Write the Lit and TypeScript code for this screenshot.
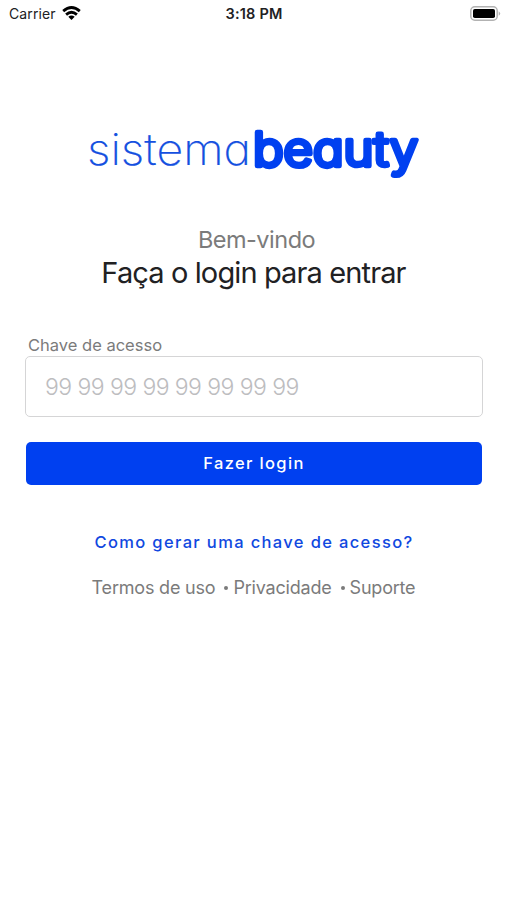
import { LitElement, html, css } from "lit";
import { customElement } from "lit/decorators.js";

@customElement("app-root")
export class AppRoot extends LitElement {
  static styles = css`
    :host { display: block; height: 900px; background: #fff; font-family: Inter, "Liberation Sans", sans-serif; color: #212123; }
    * { box-sizing: border-box; }
    .status { height: 28px; display: grid; grid-template-columns: 1fr auto 1fr; align-items: center; padding: 0 6px 0 9px; font-size: 14px; line-height: 28px; }
    .carrier { display: flex; align-items: center; gap: 6px; letter-spacing: 0.1px; }
    .time { font-weight: 600; font-size: 14.5px; letter-spacing: 0.2px; margin-right: 2px; }
    .battery { justify-self: end; }
    svg { display: block; }
    .carrier svg { margin-top: -2px; }
    .battery { margin-top: -2px; }
    .logo { margin: 92px auto 0; width: 340px; height: 68px; overflow: visible; }
    .thin, .heavy { font-family: Inter, sans-serif; font-feature-settings: "cv11"; stroke-linejoin: round; }
    .thin { font-size: 43.5px; font-weight: 200; fill: #1450e0; stroke: #1450e0; stroke-width: 0.2; }
    .heavy { font-size: 47px; font-weight: 300; fill: #0040f0; stroke: #0040f0; stroke-width: 4.6; }
    .welcome { margin-top: 37px; padding-left: 6px; text-align: center; font-size: 23.5px; line-height: 30px; color: #7b7b7b; letter-spacing: -0.5px; }
    h1 { margin: 0; text-align: center; font-weight: 400; font-size: 29px; line-height: 36px; letter-spacing: -0.88px; }
    form { margin: 44px 24px 0 25px; display: flex; flex-direction: column; }
    label { font-size: 16.5px; line-height: 20px; padding-left: 3px; margin-bottom: 1px; color: #7b7b7b; }
    input { height: 61px; border: 1.5px solid #d5d5d6; border-radius: 5px; padding: 0 19px; font: 300 23px Inter, sans-serif; letter-spacing: -0.56px; outline: 0; background: #fff; }
    input::placeholder { color: #bdbdbf; opacity: 1; }
    button { margin: 25px 1px 0; height: 43px; border: 0; border-radius: 5px; background: #0040f0; color: #fff; font: 500 16.5px Inter, sans-serif; letter-spacing: 1.35px; padding: 0 0 2px 0; }
    .help { margin-top: 46px; text-align: center; font-weight: 550; font-size: 16.5px; line-height: 22px; letter-spacing: 1.36px; padding-left: 1px; color: #1048e0; }
    .links { margin-top: 24px; display: flex; justify-content: center; font-size: 18px; line-height: 22px; color: #7b7b7b; letter-spacing: -0.2px; }
    .dot { width: 4px; height: 4px; border-radius: 50%; background: #7b7b7b; margin: 9px 5px 0 9px; }
  `;

  render() {
    return html`
      <div class="status">
        <div class="carrier"><span>Carrier</span>
          <svg width="19" height="14" viewBox="0 0 19 14" fill="none" stroke="#000" stroke-width="2.8">
            <path d="M1.2 5.1Q9.5-2 17.8 5.1M4.1 8.6Q9.5 4 14.9 8.6"/>
            <path d="M6.3 10.8Q9.5 8.2 12.7 10.8L9.5 14Z" fill="#000" stroke="none"/>
          </svg>
        </div>
        <div class="time">3:18 PM</div>
        <svg class="battery" width="31" height="15" viewBox="0 0 31 15">
          <rect x=".8" y=".8" width="26.4" height="13.4" rx="4" fill="#fff" stroke="#b2b2b2" stroke-width="1.5"/>
          <rect x="3" y="3" width="22" height="9" rx="1.8"/>
          <path d="M28.7 5.2q3 2.3 0 4.6z" fill="#b2b2b2"/>
        </svg>
      </div>
      <svg class="logo" viewBox="0 0 340 68" role="img" aria-label="sistema beauty">
        <text class="thin" x="3" y="45" textLength="164" lengthAdjust="spacingAndGlyphs">sistema</text>
        <text class="heavy" x="169" y="45.5" textLength="165" lengthAdjust="spacingAndGlyphs">beauty</text>
      </svg>
      <div class="welcome"><span>Bem-vindo</span></div>
      <h1><span>Faça o login para entrar</span></h1>
      <form>
        <label for="key"><span>Chave de acesso</span></label>
        <input id="key" placeholder="99 99 99 99 99 99 99 99" />
        <button type="button"><span>Fazer login</span></button>
      </form>
      <div class="help"><span>Como gerar uma chave de acesso?</span></div>
      <div class="links"><span>Termos de uso</span><i class="dot"></i><span>Privacidade</span><i class="dot"></i><span>Suporte</span></div>
    `;
  }
}
